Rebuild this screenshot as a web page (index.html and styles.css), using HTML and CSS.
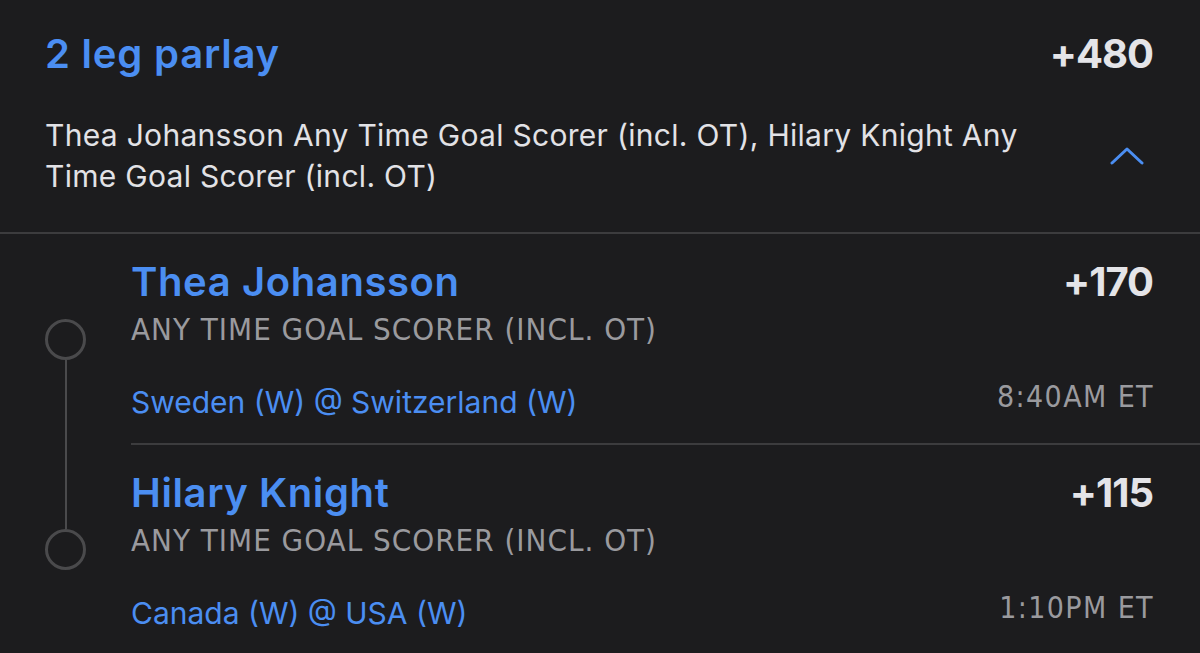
FILE: index.html
```html
<!DOCTYPE html>
<html lang="en">
<head>
<meta charset="utf-8">
<title>2 leg parlay</title>
<link rel="stylesheet" href="styles.css">
</head>
<body>
<main class="card">
  <header class="summary">
    <div class="summary-top">
      <h1 class="title">2 leg parlay</h1>
      <span class="odds">+480</span>
    </div>
    <div class="summary-desc">
      <p class="desc">Thea Johansson Any Time Goal Scorer (incl. OT), Hilary Knight Any Time Goal Scorer (incl. OT)</p>
      <svg class="chevron" width="34" height="20" viewBox="0 0 34 20" aria-hidden="true">
        <polyline points="2,17 17,3 32,17" fill="none" stroke="#4b8ef2" stroke-width="3" stroke-linecap="round" stroke-linejoin="round"/>
      </svg>
    </div>
  </header>

  <section class="legs">
    <article class="leg leg-first">
      <div class="rail">
        <span class="seg seg-top"></span>
        <span class="dot"></span>
        <span class="seg seg-bottom"></span>
      </div>
      <div class="leg-body">
        <div class="leg-row">
          <h2 class="name">Thea Johansson</h2>
          <span class="odds">+170</span>
        </div>
        <div class="market">ANY TIME GOAL SCORER (INCL. OT)</div>
        <div class="leg-row game-row">
          <span class="game">Sweden (W) @ Switzerland (W)</span>
          <span class="time">8:40AM ET</span>
        </div>
      </div>
    </article>

    <article class="leg leg-last">
      <div class="rail">
        <span class="seg seg-top"></span>
        <span class="dot"></span>
        <span class="seg seg-bottom"></span>
      </div>
      <div class="leg-body">
        <div class="leg-row">
          <h2 class="name">Hilary Knight</h2>
          <span class="odds">+115</span>
        </div>
        <div class="market">ANY TIME GOAL SCORER (INCL. OT)</div>
        <div class="leg-row game-row">
          <span class="game">Canada (W) @ USA (W)</span>
          <span class="time">1:10PM ET</span>
        </div>
      </div>
    </article>
  </section>
</main>
</body>
</html>
```

FILE: styles.css
```css
* { box-sizing: border-box; }

html, body {
  margin: 0;
  padding: 0;
  background: #1c1c1e;
}

body {
  font-family: "Inter", "Lato", sans-serif;
  color: #e2e2e6;
  overflow: hidden;
}

.card {
  width: 1200px;
}

.summary {
  padding: 30px 47px 35px 45px;
  border-bottom: 2px solid #3c3c3e;
}

.summary-top {
  display: flex;
  justify-content: space-between;
  align-items: flex-start;
}

.title {
  margin: 0;
  font-size: 40px;
  line-height: 48px;
  font-weight: 600;
  color: #4b8ef2;
  letter-spacing: 0.8px;
}

.odds {
  font-size: 40px;
  line-height: 48px;
  font-weight: 700;
  color: #e4e4e8;
  letter-spacing: -1px;
}

.summary-desc {
  display: flex;
  align-items: center;
  justify-content: space-between;
  margin-top: 37px;
}

.desc {
  margin: 0;
  width: 1010px;
  font-size: 30px;
  line-height: 41px;
  font-weight: 400;
  letter-spacing: 0.3px;
  color: #e2e2e6;
}

.chevron {
  display: block;
  margin-right: 9px;
}

.leg {
  display: grid;
  grid-template-columns: 131px 1fr;
}

.rail {
  display: flex;
  flex-direction: column;
  align-items: center;
}

.seg {
  flex: 1;
  width: 2px;
  background: #4a4a4c;
}

.leg-first .seg-top,
.leg-last .seg-bottom {
  background: transparent;
}

.dot {
  width: 41px;
  height: 41px;
  border: 3px solid #4a4a4c;
  border-radius: 50%;
  flex: none;
}

.leg-body {
  padding: 24px 47px 23px 0;
}

.leg-first .leg-body {
  border-bottom: 2px solid #3c3c3e;
}

.leg-row {
  display: flex;
  justify-content: space-between;
  align-items: flex-start;
}

.name {
  margin: 0;
  font-size: 40px;
  line-height: 48px;
  font-weight: 600;
  letter-spacing: 0.6px;
  color: #4b8ef2;
}

.market {
  margin-top: 5px;
  font-family: "DejaVu Sans Condensed", "Liberation Sans", sans-serif;
  font-size: 31px;
  line-height: 36px;
  letter-spacing: 1px;
  color: #9a9a9e;
}

.game-row {
  margin-top: 37px;
}

.game {
  font-size: 30px;
  line-height: 36px;
  color: #4b8ef2;
}

.time {
  margin-top: -5px;
  margin-right: -1px;
  font-family: "DejaVu Sans Condensed", "Liberation Sans", sans-serif;
  font-size: 30px;
  line-height: 36px;
  letter-spacing: 1.4px;
  color: #9a9a9e;
}
```
